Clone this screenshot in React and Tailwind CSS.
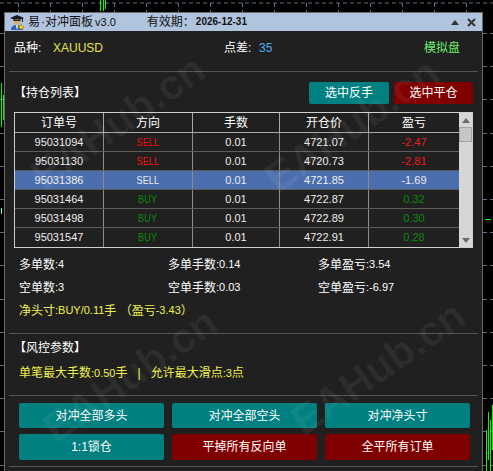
import React from 'react';

const rows = [
  { id: '95031094', dir: 'SELL', lots: '0.01', price: '4721.07', pl: '-2.47' },
  { id: '95031130', dir: 'SELL', lots: '0.01', price: '4720.73', pl: '-2.81' },
  { id: '95031386', dir: 'SELL', lots: '0.01', price: '4721.85', pl: '-1.69', sel: true },
  { id: '95031464', dir: 'BUY', lots: '0.01', price: '4722.87', pl: '0.32' },
  { id: '95031498', dir: 'BUY', lots: '0.01', price: '4722.89', pl: '0.30' },
  { id: '95031547', dir: 'BUY', lots: '0.01', price: '4722.91', pl: '0.28' },
];

function Chart() {
  const vx = [];
  for (let x = 18; x < 493; x += 32) vx.push(x);
  const hy = [3];
  for (let i = 0; i < 14; i++) hy.push(Math.round(33 + 33.2 * i) + 0.5);
  return (
    <svg className="absolute inset-0" width="493" height="471" viewBox="0 0 493 471">
      {vx.map((x) => (
        <line key={'v' + x} x1={x + 0.5} y1="3" x2={x + 0.5} y2="471" stroke="#5f6f80" strokeDasharray="4 3" />
      ))}
      {hy.map((y) => (
        <line key={'h' + y} x1="0" y1={y} x2="493" y2={y} stroke="#5f6f80" strokeDasharray="4 3" />
      ))}
      <g stroke="#00ff00" strokeWidth="1">
        <line x1="100.5" y1="0" x2="100.5" y2="11" />
        <line x1="103.5" y1="0" x2="103.5" y2="11" />
        <line x1="105.5" y1="0" x2="105.5" y2="9" />
        <line x1="1.5" y1="83" x2="1.5" y2="127" />
        <line x1="3.5" y1="95" x2="3.5" y2="120" />
        <line x1="485" y1="219.5" x2="491" y2="219.5" />
        <line x1="486.5" y1="430" x2="486.5" y2="471" />
        <line x1="488.5" y1="412" x2="488.5" y2="460" />
        <line x1="490.5" y1="420" x2="490.5" y2="471" />
        <line x1="492.5" y1="405" x2="492.5" y2="450" />
      </g>
      <line x1="1.5" y1="208" x2="1.5" y2="214" stroke="#7fd" />
    </svg>
  );
}

function AppIcon() {
  return (
    <svg width="16" height="17" viewBox="0 0 16 17">
      <path d="M1 4 L8 1 L15 4 L8 7 Z" fill="#1a1a1a" />
      <rect x="13" y="4" width="1" height="4" fill="#1a1a1a" />
      <ellipse cx="8" cy="8" rx="3.5" ry="3" fill="#d9b070" />
      <rect x="4.5" y="5.5" width="7" height="1.5" fill="#222" />
      <path d="M2 16 Q2 11 8 11 Q14 11 14 16 Z" fill="#2f5fb0" />
      <path d="M7 11 L9 11 L8.5 15 L7.5 15 Z" fill="#e8e8e8" />
      <path d="M12 10.5 L15 13 L12 15.5 L9.5 13 Z" fill="#f2d21a" stroke="#8a6d00" strokeWidth="0.6" />
    </svg>
  );
}

function Stat({ label, value }) {
  return (
    <div className="h-[23px] flex items-center text-white">
      <span className="text-[12px] leading-none">{label}</span>
      <span className="text-[11px] leading-none">:{value}</span>
    </div>
  );
}

function Btn({ children, red, className = '' }) {
  return (
    <div
      className={
        'flex items-center justify-center rounded-[2px] text-white text-[12px] leading-none ' +
        (red ? 'bg-[#800000] ' : 'bg-[#008080] ') +
        className
      }
    >
      {children}
    </div>
  );
}

function Watermark({ x, y }) {
  return (
    <div
      className="absolute pointer-events-none font-bold text-[42px] leading-none text-white/[0.06] whitespace-nowrap"
      style={{ left: x, top: y, transform: 'translate(-50%, -50%) rotate(-35deg)' }}
    >
      EAHub.cn
    </div>
  );
}

export default function App() {
  const widths = ['w-[89px]', 'w-[89px]', 'w-[87px]', 'w-[89px]', 'w-[90px]'];
  const heads = ['订单号', '方向', '手数', '开仓价', '盈亏'];
  return (
    <div className="relative w-[493px] h-[471px] overflow-hidden bg-black font-['Liberation_Sans','Noto_Sans_CJK_SC',sans-serif]">
      <Chart />
      <div className="relative ml-[4px] mt-[12px] w-[479px] h-[470px] border-x border-t border-[#6a6a6a] bg-[#202020]">
        {/* title bar */}
        <div className="h-[18px] bg-[#b0c4de] flex items-center text-[#111]">
          <div className="ml-[4px]">
            <AppIcon />
          </div>
          <span className="ml-[3px] text-[12px] leading-none">易</span>
          <span className="ml-[1px] text-[12px] leading-none">·对冲面板</span>
          <span className="ml-[2px] text-[11px] leading-none">v3.0</span>
          <span className="ml-[31px] text-[12px] leading-none">有效期：</span>
          <span className="ml-[1px] text-[10px] font-bold leading-none">2026-12-31</span>
          <div className="ml-auto flex items-center">
            <svg width="8" height="5" viewBox="0 0 8 5">
              <path d="M0 5 L4 0 L8 5 Z" fill="#333" />
            </svg>
            <svg className="ml-[8px] mr-[6px]" width="9" height="9" viewBox="0 0 9 9">
              <path d="M1 1 L8 8 M8 1 L1 8" stroke="#333" strokeWidth="2" />
            </svg>
          </div>
        </div>

        {/* info row */}
        <div className="h-[34px] flex items-center px-[9px]">
          <span className="w-[39px] text-white text-[12px] leading-none">品种:</span>
          <span className="w-[171px] text-[#e4e44e] text-[12px] leading-none">XAUUSD</span>
          <span className="w-[35px] text-white text-[12px] leading-none">点差:</span>
          <span className="text-[#4aaeea] text-[12px] leading-none">35</span>
          <span className="ml-auto mr-[13px] text-[#6cef6c] text-[12px] leading-none">模拟盘</span>
        </div>
        <div className="mt-[6px] mx-[4px] h-px bg-[#555]" />

        {/* positions header */}
        <div className="mt-[10px] h-[22px] flex items-center px-[9px]">
          <span className="text-white text-[12px] leading-none">【持仓列表】</span>
          <Btn className="ml-auto w-[80px] h-[22px]">选中反手</Btn>
          <Btn red className="ml-[5px] w-[79px] h-[22px]">选中平仓</Btn>
        </div>

        {/* table */}
        <div className="mt-[8px] mx-[9px] border border-[#cfcfcf] flex">
          <div className="flex flex-col">
            <div className="h-[20px] flex border-b border-[#a8a8a8]">
              {heads.map((h, i) => (
                <div
                  key={h}
                  className={
                    widths[i] +
                    ' flex items-center justify-center text-white text-[12px] leading-none ' +
                    (i < 4 ? 'border-r border-[#a8a8a8]' : '')
                  }
                >
                  {h}
                </div>
              ))}
            </div>
            {rows.map((r, ri) => {
              const cells = [r.id, r.dir, r.lots, r.price, r.pl];
              return (
                <div
                  key={r.id}
                  className={
                    'h-[19px] flex ' +
                    (ri < rows.length - 1 ? 'border-b border-[#5c5c5c] ' : '') +
                    (r.sel ? 'bg-[#4b6eaf]' : '')
                  }
                >
                  {cells.map((c, i) => {
                    let color = 'text-[#eeeeee]';
                    if (!r.sel) {
                      if (i === 1) color = r.dir === 'SELL' ? 'text-[#f01010]' : 'text-[#0a8a0a]';
                      if (i === 4) color = r.pl.startsWith('-') ? 'text-[#f01a1a]' : 'text-[#0a8a0a]';
                    }
                    return (
                      <div
                        key={i}
                        className={
                          widths[i] +
                          ' flex items-center justify-center text-[11px] leading-none ' +
                          color +
                          (i < 4 ? ' border-r border-[#8c8c8c]' : '')
                        }
                      >
                        {i === 1 ? <span className="inline-block scale-x-[0.82] tracking-[0.2px]">{c}</span> : c}
                      </div>
                    );
                  })}
                </div>
              );
            })}
          </div>
          {/* scrollbar */}
          <div className="w-[14px] bg-[#d6d6d6] flex flex-col">
            <div className="h-[14px] flex items-center justify-center">
              <svg width="8" height="5" viewBox="0 0 8 5">
                <path d="M0 5 L4 0 L8 5 Z" fill="#6a6a6a" />
              </svg>
            </div>
            <div className="h-[15px] bg-[#c6c6c6] border border-[#a4a4a4]" />
            <div className="flex-1" />
            <div className="h-[14px] flex items-center justify-center">
              <svg width="8" height="5" viewBox="0 0 8 5">
                <path d="M0 0 L8 0 L4 5 Z" fill="#6a6a6a" />
              </svg>
            </div>
          </div>
        </div>

        {/* stats */}
        <div className="mt-[5px] pl-[14px] grid grid-cols-[149px_150px_150px]">
          <Stat label="多单数" value="4" />
          <Stat label="多单手数" value="0.14" />
          <Stat label="多单盈亏" value="3.54" />
          <Stat label="空单数" value="3" />
          <Stat label="空单手数" value="0.03" />
          <Stat label="空单盈亏" value="-6.97" />
          <div className="col-span-3 h-[23px] flex items-center text-[#f0f04c]">
            <span className="text-[12px] leading-none">净头寸</span>
            <span className="text-[11px] leading-none">:BUY/0.11</span>
            <span className="text-[12px] leading-none">手 （盈亏</span>
            <span className="text-[11px] leading-none">-3.43</span>
            <span className="text-[12px] leading-none">）</span>
          </div>
        </div>
        <div className="mt-[11px] mx-[4px] h-px bg-[#555]" />

        {/* risk params */}
        <div className="h-[28px] flex items-center px-[9px] text-white text-[12px] leading-none">【风控参数】</div>
        <div className="h-[22px] flex items-center pl-[14px] text-[#f0f04c]">
          <span className="text-[12px] leading-none">单笔最大手数</span>
          <span className="text-[11px] leading-none">:0.50</span>
          <span className="text-[12px] leading-none">手</span>
          <span className="mx-[10px] text-[12px] leading-none">|</span>
          <span className="text-[12px] leading-none">允许最大滑点</span>
          <span className="text-[11px] leading-none">:3</span>
          <span className="text-[12px] leading-none">点</span>
        </div>
        <div className="mt-[11px] mx-[4px] h-px bg-[#555]" />

        {/* action buttons */}
        <div className="mt-[7px] pl-[14px] grid grid-cols-[145px_145px_145px] gap-x-[8px] gap-y-[6px]">
          <Btn className="h-[25px]">对冲全部多头</Btn>
          <Btn className="h-[25px]">对冲全部空头</Btn>
          <Btn className="h-[25px]">对冲净头寸</Btn>
          <Btn className="h-[26px]">1:1锁仓</Btn>
          <Btn red className="h-[26px]">平掉所有反向单</Btn>
          <Btn red className="h-[26px]">全平所有订单</Btn>
        </div>
        <div className="mt-[6px] mx-[4px] h-px bg-[#555]" />
      </div>
      <Watermark x={118} y={122} />
      <Watermark x={352} y={125} />
      <Watermark x={130} y={375} />
      <Watermark x={378} y={368} />
    </div>
  );
}
